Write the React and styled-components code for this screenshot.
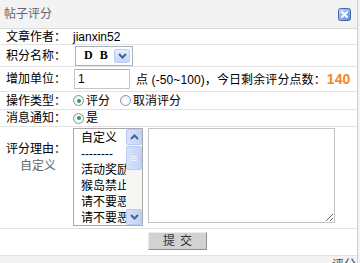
import React from 'react';
import styled, { createGlobalStyle } from 'styled-components';

const GlobalStyle = createGlobalStyle`
  html, body {
    margin: 0;
    padding: 0;
    background: #f2f2f2;
  }
  body {
    font: 12px/14px "Liberation Sans", "Noto Sans CJK SC", sans-serif;
    color: #000;
    overflow: hidden;
  }
`;

const reasons = ['自定义', '--------', '活动奖励', '猴岛禁止灌水', '请不要恶意刷分', '请不要恶意灌水'];

const Chevron = ({ up }) => (
  <svg width="9" height="6" viewBox="0 0 9 6">
    <path d={up ? 'M1 5 L4.5 1.5 L8 5' : 'M1 1 L4.5 4.5 L8 1'} fill="none" stroke="#4d6185" strokeWidth="2" />
  </svg>
);

const CloseIcon = () => (
  <svg width="13" height="13" viewBox="0 0 13 13">
    <defs>
      <linearGradient id="cg" x1="0" y1="0" x2="1" y2="1">
        <stop offset="0" stopColor="#c9dbf8" />
        <stop offset="1" stopColor="#5a85d6" />
      </linearGradient>
    </defs>
    <rect x="0.5" y="0.5" width="12" height="12" rx="2" fill="url(#cg)" stroke="#3d68b8" />
    <path d="M4 4 L9 9 M9 4 L4 9" stroke="#fff" strokeWidth="1.8" strokeLinecap="square" />
  </svg>
);

const App = () => {
  return (
    <React.Fragment>
      <GlobalStyle />
      <Dialog>
        <TitleBar>
          <span>帖子评分</span>
          <CloseBtn><CloseIcon /></CloseBtn>
        </TitleBar>

        <Row $h={16}>
          <Label>文章作者：</Label>
          <Value $pl={1}>jianxin52</Value>
        </Row>

        <Row $h={22}>
          <Label>积分名称：</Label>
          <Value $pl={3}>
            <Select>
              <SelectText>D B</SelectText>
              <DropBtn><Chevron /></DropBtn>
            </Select>
          </Value>
        </Row>

        <Row $h={25}>
          <Label>增加单位：</Label>
          <Value $pl={2}>
            <Input defaultValue="1" />
            <Hint>点 (-50~100)，今日剩余评分点数：<Points>140</Points></Hint>
          </Value>
        </Row>

        <Row $h={18}>
          <Label>操作类型：</Label>
          <Value $pl={1}>
            <RadioLabel><Radio $checked />评分</RadioLabel>
            <RadioLabel><Radio />取消评分</RadioLabel>
          </Value>
        </Row>

        <Row $h={17}>
          <Label>消息通知：</Label>
          <Value $pl={1}>
            <RadioLabel><Radio $checked />是</RadioLabel>
          </Value>
        </Row>

        <Row $h={102} $top>
          <ReasonLabel>
            <div>评分理由：</div>
            <Sub>自定义</Sub>
          </ReasonLabel>
          <Value $pl={1} $top>
            <ListBox>
              <Items>
                {reasons.map((r, i) => <Item key={i}>{r}</Item>)}
              </Items>
              <ScrollBar>
                <ScrollBtn><Chevron up /></ScrollBtn>
                <Track>
                  <Thumb><Grip /><Grip /><Grip /></Thumb>
                </Track>
                <ScrollBtn><Chevron /></ScrollBtn>
              </ScrollBar>
            </ListBox>
            <Reason />
          </Value>
        </Row>

        <Row $h={27} $top>
          <ButtonCell>
            <Submit>提交</Submit>
          </ButtonCell>
        </Row>

        <Footer>评分</Footer>
      </Dialog>
    </React.Fragment>
  );
};

export default App;

const Dialog = styled.div`
  width: 358px;
  box-sizing: border-box;
  border-right: 1px solid #cfcfcf;
  background: #fff;
`;

const TitleBar = styled.div`
  height: 29px;
  box-sizing: border-box;
  display: flex;
  align-items: center;
  justify-content: space-between;
  padding: 0 6px 1px 4px;
  background: #f3f3f3;
  border-bottom: 1px solid #d9d9d9;
  color: #666;
`;

const CloseBtn = styled.span`
  display: flex;
  margin-top: 1px;
  cursor: pointer;
`;

const Row = styled.div`
  display: flex;
  align-items: ${(p) => (p.$top ? 'flex-start' : 'center')};
  height: ${(p) => p.$h}px;
  box-sizing: border-box;
  border-bottom: 1px solid #e3e3e3;
`;

const Label = styled.div`
  width: 72px;
  flex: none;
  text-align: center;
`;

const ReasonLabel = styled(Label)`
  padding-top: 14px;
  line-height: 17px;
`;

const Sub = styled.div`
  color: #666;
  padding-left: 4px;
`;

const Value = styled.div`
  display: flex;
  align-items: ${(p) => (p.$top ? 'flex-start' : 'center')};
  padding-left: ${(p) => p.$pl || 0}px;
  padding-top: ${(p) => (p.$top ? 1 : 0)}px;
`;

const Select = styled.div`
  width: 58px;
  height: 20px;
  box-sizing: border-box;
  border: 1px solid #a7b0bd;
  display: flex;
  align-items: center;
  padding: 2px;
`;

const SelectText = styled.span`
  flex: 1;
  font: bold 12px "Liberation Serif", serif;
  letter-spacing: 2px;
  padding-left: 6px;
`;

const DropBtn = styled.span`
  width: 16px;
  height: 14px;
  box-sizing: border-box;
  display: flex;
  align-items: center;
  justify-content: center;
  border: 1px solid #bccdf4;
  border-radius: 2px;
  background: linear-gradient(#e6eefe, #c4d4fb);
`;

const Input = styled.input`
  width: 56px;
  height: 20px;
  box-sizing: border-box;
  border: 1px solid #c6c6c6;
  border-top-color: #b0b0b0;
  padding: 0 3px;
  font: 12px "Liberation Sans", sans-serif;
  outline: none;
`;

const Hint = styled.span`
  margin-left: 6px;
  white-space: nowrap;
  letter-spacing: 0.1px;
`;

const Points = styled.b`
  color: #f0891f;
  font-size: 14px;
  margin-left: 1px;
`;

const RadioLabel = styled.label`
  display: inline-flex;
  align-items: center;
  gap: 2px;
  margin-right: 10px;
`;

const Radio = styled.span`
  width: 11px;
  height: 11px;
  box-sizing: border-box;
  border-radius: 50%;
  border: 1px solid #7f93ad;
  background: radial-gradient(circle at 60% 60%, #fff 30%, #dfe3ea 100%);
  display: inline-flex;
  align-items: center;
  justify-content: center;
  &::after {
    content: '';
    width: 4px;
    height: 4px;
    border-radius: 50%;
    background: ${(p) => (p.$checked ? '#2da22e' : 'transparent')};
  }
`;

const ListBox = styled.div`
  width: 70px;
  height: 98px;
  box-sizing: border-box;
  border: 1px solid #a9a9a9;
  display: flex;
  overflow: hidden;
`;

const Items = styled.div`
  flex: 1;
  overflow: hidden;
  padding: 1px 0 0 7px;
`;

const Item = styled.div`
  height: 16px;
  line-height: 16px;
  white-space: nowrap;
`;

const ScrollBar = styled.div`
  width: 16px;
  flex: none;
  display: flex;
  flex-direction: column;
  background: #f6f6f3;
`;

const ScrollBtn = styled.div`
  height: 16px;
  box-sizing: border-box;
  display: flex;
  align-items: center;
  justify-content: center;
  border: 1px solid #b8cbf5;
  border-radius: 2px;
  background: linear-gradient(90deg, #d6e2fd, #c1d2fb);
`;

const Track = styled.div`
  flex: 1;
  padding-top: 1px;
`;

const Thumb = styled.div`
  height: 24px;
  box-sizing: border-box;
  border: 1px solid #b8cbf5;
  border-radius: 2px;
  background: linear-gradient(90deg, #d6e2fd, #c1d2fb);
  display: flex;
  flex-direction: column;
  align-items: center;
  justify-content: center;
  gap: 1px;
`;

const Grip = styled.span`
  width: 6px;
  height: 1px;
  background: #eef3fe;
`;

const Reason = styled.textarea`
  width: 187px;
  height: 95px;
  box-sizing: border-box;
  margin: 0 0 0 5px;
  border: 1px solid #c4c4c4;
  padding: 2px;
  font: 12px "Liberation Sans", sans-serif;
  outline: none;
`;

const ButtonCell = styled.div`
  padding: 3px 0 0 148px;
`;

const Submit = styled.button`
  width: 59px;
  height: 18px;
  box-sizing: border-box;
  padding: 0 0 0 5px;
  background: #d2d2d2;
  border: 1px solid;
  border-color: #ececec #8f8f8f #8f8f8f #ececec;
  color: #333;
  font: 12px/14px "Liberation Sans", "Noto Sans CJK SC", sans-serif;
  letter-spacing: 5px;
`;

const Footer = styled.div`
  height: 14px;
  text-align: right;
  padding: 2px 1px 0 0;
  color: #444;
  background: #f2f2f2;
`;
